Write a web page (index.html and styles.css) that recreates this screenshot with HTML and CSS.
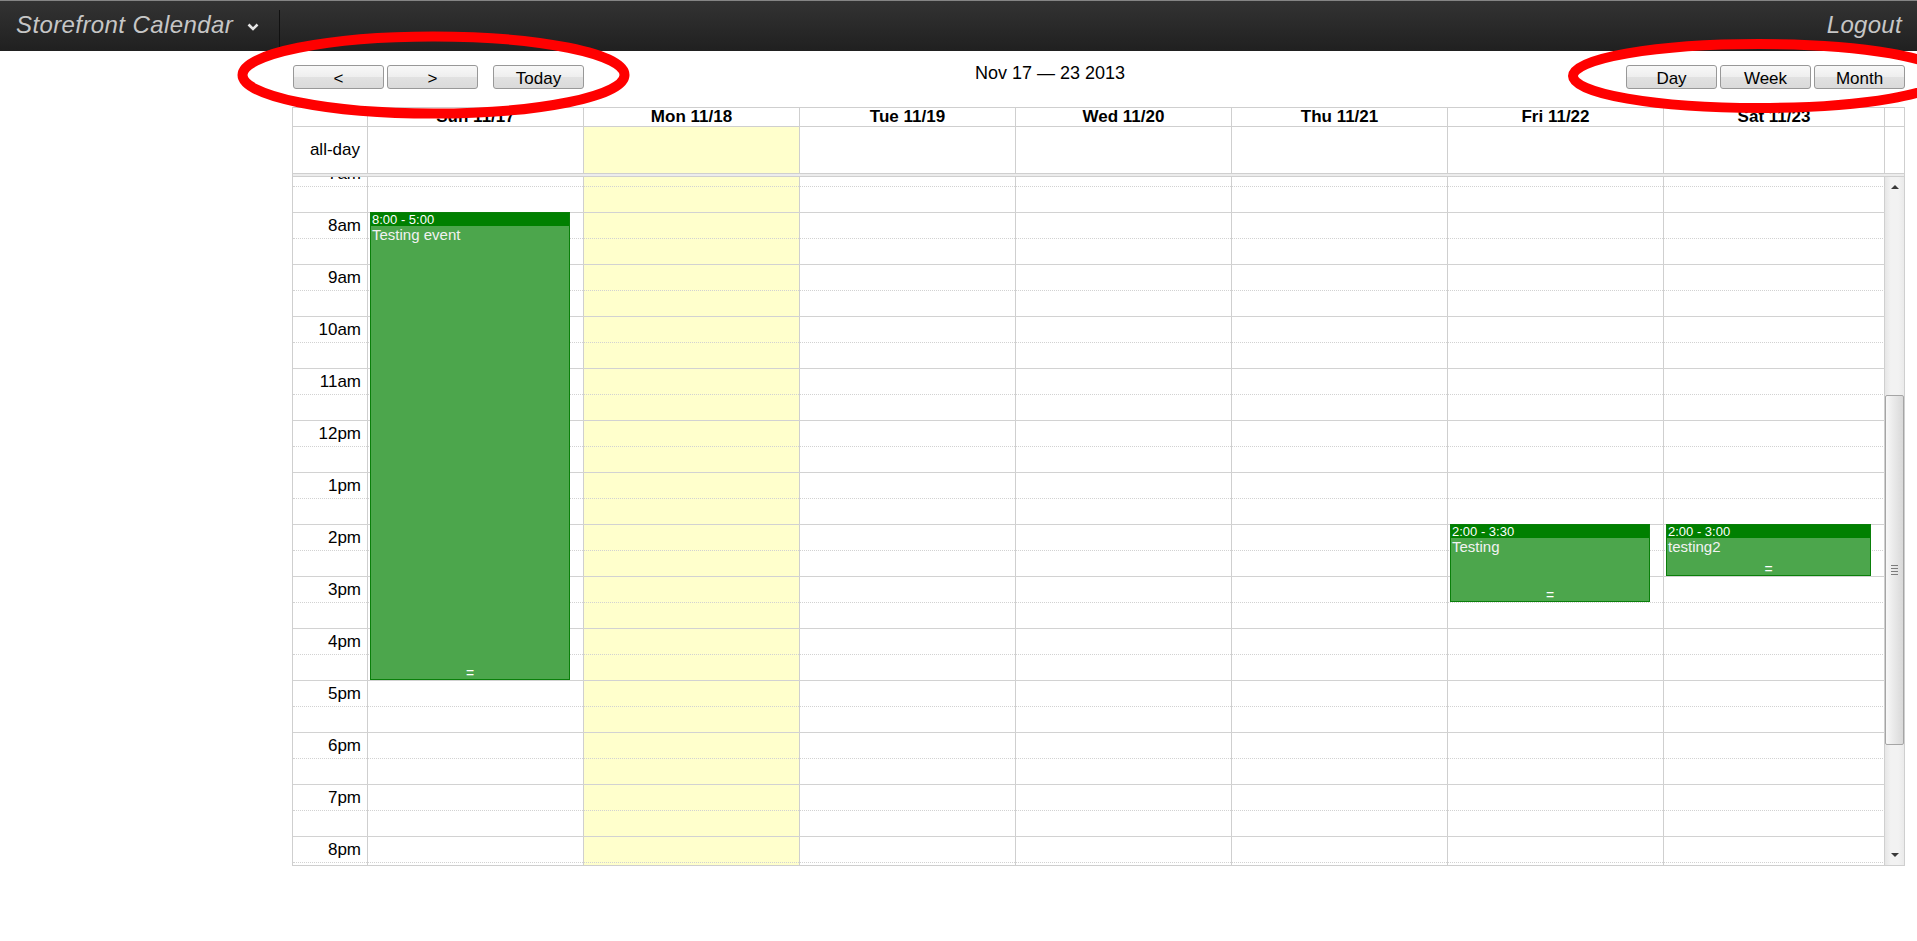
FILE: index.html
```html
<!DOCTYPE html>
<html lang="en">
<head>
<meta charset="utf-8">
<title>Storefront Calendar</title>
<link rel="stylesheet" href="styles.css">
</head>
<body>
<header class="navbar">
  <div class="brand">Storefront Calendar<svg class="caret" width="12" height="8" viewBox="0 0 12 8"><polyline points="1.5,1.5 6,6 10.5,1.5" fill="none" stroke="#e6e6e6" stroke-width="2.6"/></svg></div>
  <div class="nav-divider"></div>
  <a class="logout">Logout</a>
</header>

<main class="page">
  <div class="toolbar">
    <div class="btn-group">
      <button class="btn">&lt;</button>
      <button class="btn">&gt;</button>
      <button class="btn btn-today">Today</button>
    </div>
    <div class="title">Nov 17 — 23 2013</div>
    <div class="btn-group">
      <button class="btn">Day</button>
      <button class="btn">Week</button>
      <button class="btn">Month</button>
    </div>
  </div>

  <div class="calendar">
    <div class="cal-row head">
      <div class="cell axis"></div>
      <div class="cell">Sun 11/17</div>
      <div class="cell">Mon 11/18</div>
      <div class="cell">Tue 11/19</div>
      <div class="cell">Wed 11/20</div>
      <div class="cell">Thu 11/21</div>
      <div class="cell">Fri 11/22</div>
      <div class="cell">Sat 11/23</div>
      <div class="cell gutter"></div>
    </div>
    <div class="cal-row allday">
      <div class="cell axis">all-day</div>
      <div class="cell"></div>
      <div class="cell today"></div>
      <div class="cell"></div>
      <div class="cell"></div>
      <div class="cell"></div>
      <div class="cell"></div>
      <div class="cell"></div>
      <div class="cell gutter"></div>
    </div>
    <div class="div-row"></div>

    <div class="slots">
      <div class="viewport">
        <div class="slots-body">
          <div class="col"></div>
          <div class="col"></div>
          <div class="col today"></div>
          <div class="col"></div>
          <div class="col"></div>
          <div class="col"></div>
          <div class="col"></div>
          <div class="col"></div>

          <div class="lines">
            <div class="slot"><div class="slot-label">7am</div></div>
            <div class="slot minor"></div>
            <div class="slot"><div class="slot-label">8am</div></div>
            <div class="slot minor"></div>
            <div class="slot"><div class="slot-label">9am</div></div>
            <div class="slot minor"></div>
            <div class="slot"><div class="slot-label">10am</div></div>
            <div class="slot minor"></div>
            <div class="slot"><div class="slot-label">11am</div></div>
            <div class="slot minor"></div>
            <div class="slot"><div class="slot-label">12pm</div></div>
            <div class="slot minor"></div>
            <div class="slot"><div class="slot-label">1pm</div></div>
            <div class="slot minor"></div>
            <div class="slot"><div class="slot-label">2pm</div></div>
            <div class="slot minor"></div>
            <div class="slot"><div class="slot-label">3pm</div></div>
            <div class="slot minor"></div>
            <div class="slot"><div class="slot-label">4pm</div></div>
            <div class="slot minor"></div>
            <div class="slot"><div class="slot-label">5pm</div></div>
            <div class="slot minor"></div>
            <div class="slot"><div class="slot-label">6pm</div></div>
            <div class="slot minor"></div>
            <div class="slot"><div class="slot-label">7pm</div></div>
            <div class="slot minor"></div>
            <div class="slot"><div class="slot-label">8pm</div></div>
            <div class="slot minor"></div>
          </div>

          <div class="events">
            <div class="ev-col">
              <div class="event" style="top:52px;height:468px">
                <div class="ev-time">8:00 - 5:00</div>
                <div class="ev-title">Testing event</div>
                <div class="ev-resize">=</div>
              </div>
            </div>
            <div class="ev-col"></div>
            <div class="ev-col"></div>
            <div class="ev-col"></div>
            <div class="ev-col"></div>
            <div class="ev-col">
              <div class="event" style="top:364px;height:78px">
                <div class="ev-time">2:00 - 3:30</div>
                <div class="ev-title">Testing</div>
                <div class="ev-resize">=</div>
              </div>
            </div>
            <div class="ev-col">
              <div class="event" style="top:364px;height:52px">
                <div class="ev-time">2:00 - 3:00</div>
                <div class="ev-title">testing2</div>
                <div class="ev-resize">=</div>
              </div>
            </div>
          </div>
        </div>
      </div>
      <div class="scrollbar">
        <div class="sb-arrow"><span class="tri-up"></span></div>
        <div class="sb-track">
          <div class="sb-thumb">
            <span class="grip"></span><span class="grip"></span><span class="grip"></span><span class="grip"></span>
          </div>
        </div>
        <div class="sb-arrow"><span class="tri-down"></span></div>
      </div>
    </div>
  </div>
</main>

<svg class="marks" width="1917" height="130" viewBox="0 0 1917 130">
  <ellipse cx="433.5" cy="75" rx="191" ry="38.5" fill="none" stroke="#ff0000" stroke-width="10"/>
  <ellipse cx="1759" cy="76" rx="186" ry="32" fill="none" stroke="#ff0000" stroke-width="10"/>
</svg>
</body>
</html>
```

FILE: styles.css
```css
* { box-sizing: border-box; }

html, body { margin: 0; padding: 0; }

body {
  position: relative;
  width: 1917px;
  height: 941px;
  overflow: hidden;
  background: #fff;
  color: #000;
  font-family: "Liberation Sans", Arial, sans-serif;
}

/* ---------- navbar ---------- */
.navbar {
  display: flex;
  align-items: flex-start;
  height: 51px;
  border-top: 1px solid #858585;
  background: linear-gradient(#333333 0%, #202020 100%);
}

.brand {
  width: 279px;
  padding: 10px 0 0 16px;
  font-size: 24px;
  line-height: 27px;
  font-style: italic;
  letter-spacing: 0.4px;
  color: #c6c6c6;
  white-space: nowrap;
}

.caret {
  margin-left: 14px;
  vertical-align: 2px;
}

.nav-divider {
  width: 1px;
  height: 41px;
  margin-top: 9px;
  background: #111;
}

.logout {
  margin-left: auto;
  padding: 10px 15px 0 0;
  font-size: 24px;
  line-height: 27px;
  font-style: italic;
  letter-spacing: 0.3px;
  color: #c6c6c6;
}

/* ---------- toolbar ---------- */
.page { padding-left: 292px; }

.toolbar {
  display: flex;
  width: 1613px;
  height: 24px;
  margin-top: 14px;
  padding-left: 1px;
}

.btn-group { display: flex; gap: 3px; }

.btn {
  width: 91px;
  height: 24px;
  padding: 3px 0 0;
  margin: 0;
  border: 1px solid #989898;
  border-radius: 3px;
  background: linear-gradient(#f8f8f8 0%, #eeeeee 50%, #e1e1e1 52%, #dadada 100%);
  font-family: "Liberation Sans", Arial, sans-serif;
  font-size: 17px;
  line-height: 19px;
  color: #000;
  text-align: center;
}

.btn-today { margin-left: 12px; }

.title {
  flex: 1;
  margin-top: -2px;
  padding-left: 391px;
  font-size: 18px;
  white-space: nowrap;
}

/* ---------- calendar ---------- */
.calendar {
  width: 1613px;
  margin-top: 18px;
  border: 1px solid #cfcfcf;
  border-bottom: none;
}

.cal-row {
  display: grid;
  grid-template-columns: 75px repeat(6, 216px) 221px 19px;
}

.cell {
  border-right: 1px solid #cfcfcf;
  border-bottom: 1px solid #cfcfcf;
}

.cell.gutter { border-right: none; }

.head .cell {
  height: 19px;
  font-size: 17px;
  line-height: 18px;
  font-weight: bold;
  text-align: center;
}

.allday .cell { height: 47px; }

.allday .axis {
  display: flex;
  align-items: center;
  justify-content: flex-end;
  padding-right: 7px;
  font-size: 17px;
}

.today { background: #ffffcc; }

.div-row {
  height: 3px;
  background: #ececec;
  border-bottom: 1px solid #cfcfcf;
}

/* ---------- time slots ---------- */
.slots {
  display: flex;
  height: 689px;
  border-bottom: 1px solid #cfcfcf;
}

.viewport {
  width: 1592px;
  height: 688px;
  overflow: hidden;
}

.slots-body {
  position: relative;
  display: grid;
  grid-template-columns: 75px repeat(6, 216px) 221px;
  height: 728px;
  margin-top: -17px;
}

.col { border-right: 1px solid #cfcfcf; }

.lines {
  position: absolute;
  top: 0;
  left: 0;
  right: 0;
  bottom: 0;
}

.slot {
  height: 26px;
  border-top: 1px solid #d2d2d2;
}

.slot.minor { border-top-style: dotted; }

.slot-label {
  width: 75px;
  padding: 3px 7px 0 0;
  font-size: 17px;
  line-height: 19px;
  text-align: right;
}

.events {
  position: absolute;
  top: 0;
  bottom: 0;
  left: 75px;
  display: grid;
  grid-template-columns: repeat(6, 216px) 221px;
}

.ev-col { position: relative; }

.event {
  position: absolute;
  left: 2px;
  right: 14px;
  display: flex;
  flex-direction: column;
  overflow: hidden;
  border: 1px solid #0a7f0a;
  background: #4ca64c;
  color: #fff;
}

.ev-time {
  height: 13px;
  padding: 0 1px;
  background: #008000;
  font-size: 13px;
  line-height: 13px;
  white-space: nowrap;
}

.ev-title {
  padding: 0 1px;
  font-size: 15px;
  color: #f2f2f2;
  white-space: nowrap;
}

.ev-resize {
  margin-top: auto;
  height: 12px;
  font-size: 14px;
  line-height: 12px;
  text-align: center;
}

/* ---------- fake scrollbar ---------- */
.scrollbar {
  display: flex;
  flex-direction: column;
  width: 19px;
  height: 688px;
  background: linear-gradient(to right, #e6e6e6 0%, #f2f2f2 30%, #f2f2f2 70%, #eaeaea 100%);
}

.sb-arrow {
  display: flex;
  align-items: center;
  justify-content: center;
  height: 20px;
}

.tri-up {
  width: 0;
  height: 0;
  border-left: 4px solid transparent;
  border-right: 4px solid transparent;
  border-bottom: 4px solid #3a3a3a;
}

.tri-down {
  width: 0;
  height: 0;
  border-left: 4px solid transparent;
  border-right: 4px solid transparent;
  border-top: 4px solid #3a3a3a;
}

.sb-track { flex: 1; }

.sb-thumb {
  display: flex;
  flex-direction: column;
  align-items: center;
  justify-content: center;
  gap: 2px;
  height: 350px;
  margin-top: 198px;
  border: 1px solid #a5a5a5;
  border-radius: 2px;
  background: linear-gradient(to right, #f8f8f8 0%, #e8e8e8 50%, #d9d9d9 100%);
}

.grip {
  display: block;
  width: 7px;
  height: 1px;
  background: #7d7d7d;
}

/* ---------- annotation marks ---------- */
.marks {
  position: absolute;
  top: 0;
  left: 0;
  pointer-events: none;
}
```
